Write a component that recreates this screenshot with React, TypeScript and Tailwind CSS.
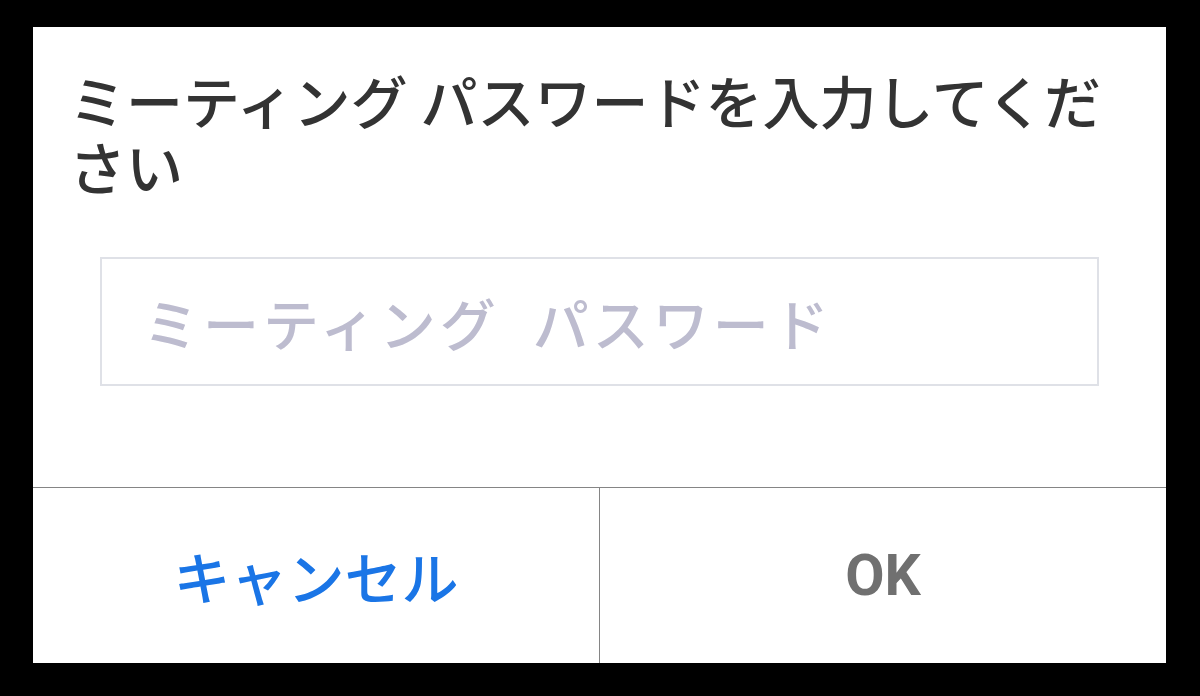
import React from 'react'

const jp = { fontFamily: '"Noto Sans CJK JP", "Noto Sans", sans-serif' }

export default function App() {
  return (
    <div className="h-[696px] w-[1200px] bg-black pl-[33px] pt-[27px]">
      <div className="flex h-[636px] w-[1133px] flex-col bg-white" style={jp}>
        <div className="px-[36px] pt-[39px]">
          <h1 className="text-[57px] font-medium leading-[66px] text-[#333333]">
            ミーティング パスワードを入力してください
          </h1>
        </div>

        <div className="mx-[67px] mt-[59px]">
          <input
            type="password"
            placeholder="ミーティング  パスワード"
            className="box-border h-[129px] w-full border-2 border-[#dfe1e7] bg-white pl-[41px] text-[56px] font-medium tracking-[4px] text-[#333333] outline-none placeholder:text-[#bdbccf]"
            style={jp}
          />
        </div>

        <div className="mt-[101px] flex h-[176px] border-t border-[#858585]">
          <button className="flex flex-1 items-center justify-center border-r border-[#858585] text-[57px] font-medium text-[#1a75e6]">
            キャンセル
          </button>
          <button
            className="flex flex-1 items-center justify-center text-[57px] font-bold text-[#707070]"
            style={{ fontFamily: 'Roboto, "Liberation Sans", sans-serif' }}
          >
            OK
          </button>
        </div>
      </div>
    </div>
  )
}
